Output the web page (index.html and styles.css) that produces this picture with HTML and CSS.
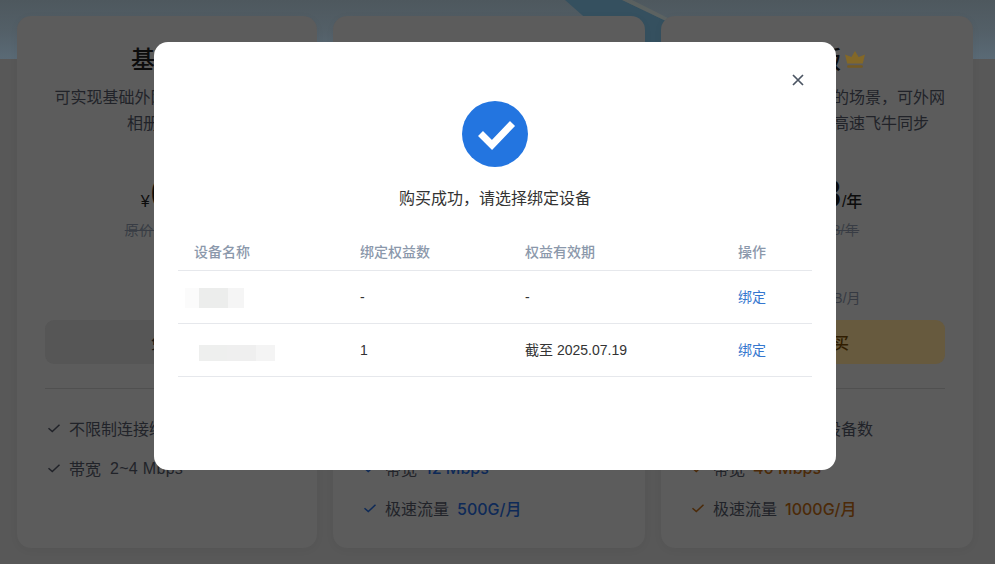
FILE: index.html
```html
<!DOCTYPE html>
<html lang="zh-CN">
<head>
<meta charset="utf-8">
<title>购买成功</title>
<link rel="stylesheet" href="styles.css">
</head>
<body>
<div class="page">
  <div class="banner">
    <svg class="banner-art" viewBox="0 0 995 59" preserveAspectRatio="none" aria-hidden="true">
      <polygon class="band" points="565,0 622,0 672,24 672,59 590,59 590,22"/>
      <polygon class="streak" points="622,0 632,0 672,20 664,20"/>
    </svg>
  </div>
  <main class="plans">
    <section class="card card-basic">
      <h2 class="name">基础版</h2>
      <p class="desc">可实现基础外网访问，支持 App<br>相册等功能</p>
      <div class="price"><span class="cur">¥</span><span class="num">0</span><span class="unit">/年</span></div>
      <div class="orig">原价 ¥198/年</div>
      <div class="note"></div>
      <button class="buy">免费</button>
      <hr class="rule">
      <ul class="feats">
        <li><svg class="tick" viewBox="0 0 14 14"><path d="M1.5 7.2 5.3 10.6 12.5 3.8"/></svg>不限制连接绑定设备数</li>
        <li><svg class="tick" viewBox="0 0 14 14"><path d="M1.5 7.2 5.3 10.6 12.5 3.8"/></svg>帯宽<span class="val-plain">2~4 Mbps</span></li>
      </ul>
    </section>
    <section class="card card-pro">
      <h2 class="name">进阶版</h2>
      <p class="desc">适合日常远程访问的场景，可外网<br>访问相册并支持高速同步</p>
      <div class="price"><span class="cur">¥</span><span class="num">128</span><span class="unit">/年</span></div>
      <div class="orig">原价 ¥298/年</div>
      <div class="note">含 500GB/月</div>
      <button class="buy">立即购买</button>
      <hr class="rule">
      <ul class="feats">
        <li><svg class="tick" viewBox="0 0 14 14"><path d="M1.5 7.2 5.3 10.6 12.5 3.8"/></svg>不限制连接绑定设备数</li>
        <li><svg class="tick" viewBox="0 0 14 14"><path d="M1.5 7.2 5.3 10.6 12.5 3.8"/></svg>帯宽<span class="val">12 Mbps</span></li>
        <li><svg class="tick" viewBox="0 0 14 14"><path d="M1.5 7.2 5.3 10.6 12.5 3.8"/></svg>极速流量<span class="val">500G/月</span></li>
      </ul>
    </section>
    <section class="card card-top">
      <h2 class="name">高级版<svg class="crown" viewBox="0 0 20 18" aria-hidden="true"><path class="crown-top" d="M10 0 13.6 6 20 3.4 17.8 12.4H2.2L0 3.4 6.4 6Z"/><rect class="crown-base" x="2.2" y="14.2" width="15.6" height="2.6" rx="1"/></svg></h2>
      <p class="desc">适合大流量远程传输的场景，可外网<br>可访问相册并支持高速飞牛同步</p>
      <div class="price"><span class="cur">¥</span><span class="num">238</span><span class="unit">/年</span></div>
      <div class="orig">原价 ¥498/年</div>
      <div class="note">含 1000GB/月</div>
      <button class="buy">立即购买</button>
      <hr class="rule">
      <ul class="feats">
        <li><svg class="tick" viewBox="0 0 14 14"><path d="M1.5 7.2 5.3 10.6 12.5 3.8"/></svg>不限制连接绑定设备数</li>
        <li><svg class="tick" viewBox="0 0 14 14"><path d="M1.5 7.2 5.3 10.6 12.5 3.8"/></svg>帯宽<span class="val">40 Mbps</span></li>
        <li><svg class="tick" viewBox="0 0 14 14"><path d="M1.5 7.2 5.3 10.6 12.5 3.8"/></svg>极速流量<span class="val">1000G/月</span></li>
      </ul>
    </section>
  </main>
  <div class="scrim">
    <div class="modal" role="dialog">
      <button class="close" aria-label="关闭"><svg viewBox="0 0 12 12"><path d="M1 1 11 11M11 1 1 11"/></svg></button>
      <svg class="ok" viewBox="0 0 66 66" aria-hidden="true"><circle cx="33" cy="33" r="33"/><path d="M18.5 32.5 30 44 50.5 22.5"/></svg>
      <p class="msg">购买成功，请选择绑定设备</p>
      <table class="devices">
        <thead>
          <tr><th class="c1">设备名称</th><th class="c2">绑定权益数</th><th class="c3">权益有效期</th><th class="c4">操作</th></tr>
        </thead>
        <tbody>
          <tr>
            <td class="cell-name"><div class="mosaic m-a"><i class="p1"></i><i class="p2"></i><i class="p3"></i></div></td>
            <td class="plain">-</td><td class="plain">-</td><td><a class="bind">绑定</a></td>
          </tr>
          <tr>
            <td class="cell-name"><div class="mosaic m-b"><i class="p4"></i><i class="p5"></i><i class="p6"></i></div></td>
            <td class="plain">1</td><td>截至 2025.07.19</td><td><a class="bind">绑定</a></td>
          </tr>
        </tbody>
      </table>
    </div>
  </div>
</div>
</body>
</html>
```

FILE: styles.css
```css
* { box-sizing: border-box; }
html, body { margin: 0; padding: 0; }
body {
  font-family: "Liberation Sans", "Noto Sans CJK SC", sans-serif;
  background: #585858;
}
.page {
  position: relative;
  width: 995px;
  height: 564px;
  overflow: hidden;
  background: #585858;
}
.banner {
  position: absolute;
  left: 0; top: 0; right: 0;
  height: 59px;
  background: linear-gradient(180deg, #4e585e 0%, #535f67 50%, #5a6a76 100%);
}
.banner-art { display: block; width: 100%; height: 100%; }
.band { fill: #35505f; }
.streak { fill: #6e6e62; opacity: .4; }

.plans {
  position: relative;
  display: flex;
  gap: 16px;
  padding: 16px 22px 16px 17px;
}
.card {
  flex: 0 0 312px;
  height: 532px;
  padding: 28px 28px 0;
  background: #5c5c5c;
  border-radius: 14px;
  box-shadow: 0 2px 10px rgba(0, 0, 0, .04);
  text-align: center;
}
.card-basic { flex-basis: 300px; }
.name {
  margin: 0;
  font-size: 24px;
  line-height: 32px;
  font-weight: 500;
  color: #0c0c0c;
}
.crown { width: 20px; height: 18px; margin-left: 4px; vertical-align: -1px; }
.crown-top { fill: #836828; }
.crown-base { fill: #745a22; }
.desc {
  margin: 9px -8px 0;
  font-size: 16px;
  line-height: 26px;
  color: #212329;
}
.price {
  display: flex;
  justify-content: center;
  align-items: baseline;
  height: 44px;
  margin-top: 35px;
  color: #0c0c0c;
  font-weight: 700;
}
.cur { font-size: 16px; font-weight: 500; margin-right: 1px; }
.num { font-size: 38px; line-height: 44px; letter-spacing: -2px; }
.unit { font-size: 16px; font-weight: 500; margin-left: 3px; }
.orig {
  margin-top: 4px;
  font-size: 14px;
  line-height: 20px;
  letter-spacing: .4px;
  color: #383c44;
  text-decoration: line-through;
}
.note {
  height: 20px;
  margin-top: 48px;
  font-size: 14px;
  line-height: 20px;
  color: #363a42;
}
.buy {
  display: block;
  width: 100%;
  height: 44px;
  margin-top: 12px;
  border: 0;
  border-radius: 9px;
  background: #565656;
  font: 500 16px "Liberation Sans", "Noto Sans CJK SC", sans-serif;
  color: #161616;
}
.card-pro .buy { background: #2d4774; color: #fff; }
.card-top .buy { background: #675a3e; color: #301d00; }
.rule {
  margin: 24px 0 0;
  border: 0;
  border-top: 1px solid #505050;
}
.feats { list-style: none; margin: 19px 0 0; padding: 0; text-align: left; }
.feats li {
  display: flex;
  align-items: center;
  height: 40px;
  font-size: 16px;
  color: #212329;
}
.tick {
  flex: none;
  width: 14px;
  height: 14px;
  margin: 0 8px 0 2px;
  fill: none;
  stroke: #212329;
  stroke-width: 1.5;
}
.val-plain { margin-left: 9px; letter-spacing: .3px; padding-top: 1px; }
.val { margin-left: 8px; font-family: "Inter", "Noto Sans CJK SC", sans-serif; font-weight: 500; }
.card-pro .val { color: #0e2a58; }
.card-pro .tick { stroke: #0e2a58; }
.card-top .val { color: #4c2a08; }
.card-top .tick { stroke: #4c2a08; }

.scrim {
  position: absolute;
  inset: 0;
  padding: 42px 0 0 154px;
}
.modal {
  position: relative;
  width: 682px;
  height: 428px;
  padding: 59px 24px 0;
  background: #fff;
  border-radius: 14px;
  text-align: center;
}
.close {
  position: absolute;
  top: 32px;
  right: 32px;
  width: 12px;
  height: 12px;
  padding: 0;
  border: 0;
  background: none;
}
.close svg { display: block; width: 12px; height: 12px; fill: none; stroke: #4b5563; stroke-width: 1.7; }
.ok { display: block; width: 66px; height: 66px; margin: 0 auto; }
.ok circle { fill: #2375e0; }
.ok path { fill: none; stroke: #fff; stroke-width: 7; }
.msg {
  margin: 20px 0 0;
  font-size: 16px;
  line-height: 24px;
  color: #333;
}
.devices {
  width: 634px;
  margin-top: 22px;
  border-collapse: collapse;
  table-layout: fixed;
  text-align: left;
  font-size: 14px;
}
.c1 { width: 166px; }
.c2 { width: 165px; }
.c3 { width: 213px; }
.c4 { width: 90px; }
.devices th {
  height: 37px;
  padding: 0 16px;
  border-bottom: 1px solid #e6e8ec;
  font-weight: 500;
  color: #8b98ab;
}
.devices td {
  height: 53px;
  padding: 0 16px 1px;
  border-bottom: 1px solid #e6e8ec;
  color: #333;
}
.devices .plain { padding-top: 2px; }
.devices .cell-name { padding: 0 0 0 7px; }
.bind { color: #3577cf; }
.mosaic { display: flex; }
.mosaic i { display: block; }
.m-a { height: 20px; margin-top: 2px; }
.m-b { height: 16px; margin: 7px 0 0 14px; }
.p1 { width: 14px; background: #fbfbfb; }
.p2 { width: 29px; background: #ecedec; }
.p3 { width: 16px; background: #f5f5f5; }
.p4 { width: 28px; background: #eeefee; }
.p5 { width: 29px; background: #efefef; }
.p6 { width: 19px; background: #f4f4f4; }
```
